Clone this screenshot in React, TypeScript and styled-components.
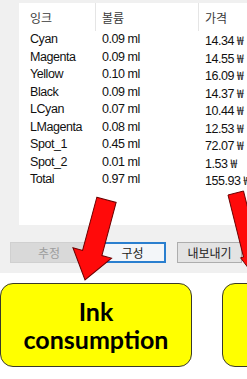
import React from 'react';
import styled, {createGlobalStyle} from 'styled-components';

const GlobalStyle = createGlobalStyle`
  html, body {
    margin: 0;
    padding: 0;
    background: #ffffff;
  }
`;

const Page = styled.div`
  position: relative;
  width: 247px;
  height: 379px;
  overflow: hidden;
  background: #ffffff;
`;

const Dialog = styled.div`
  display: flex;
  flex-direction: column;
  height: 273px;
  padding-top: 3px;
  box-sizing: border-box;
  background: #f0f0f0;
`;

const ListPanel = styled.div`
  margin-left: 19px;
  width: 260px;
  height: 222px;
  background: #ffffff;
  font-family: "Liberation Sans", Arial, sans-serif;
  font-size: 12.5px;
  letter-spacing: -0.45px;
  color: #111;
`;

const Grid = styled.div`
  display: grid;
  grid-template-columns: 76px 103px 1fr;
`;

const HeadCell = styled.div<{$divider?: boolean}>`
  height: 28px;
  display: flex;
  align-items: center;
  padding-left: ${p => (p.$divider ? '6px' : '11px')};
  border-left: ${p => (p.$divider ? '1px solid #e5e5e5' : 'none')};
  font-family: "Noto Sans CJK KR", sans-serif;
  font-size: 12px;
  letter-spacing: 0;
  color: #3a3a3a;
`;

const Cell = styled.div<{$first?: boolean}>`
  height: 17.5px;
  line-height: 17.5px;
  padding-left: ${p => (p.$first ? '11px' : '7px')};
  white-space: nowrap;
`;

const Won = styled.span`
  font-family: "Noto Sans CJK KR", sans-serif;
  font-size: 12px;
  margin-left: 3px;
`;

const ButtonRow = styled.div`
  display: flex;
  gap: 11px;
  margin-top: 17px;
  padding-left: 10px;
`;

const Button = styled.div<{$width: number; $variant?: 'disabled' | 'default'}>`
  width: ${p => p.$width}px;
  height: 21px;
  box-sizing: border-box;
  display: flex;
  align-items: center;
  justify-content: center;
  font-family: "Noto Sans CJK KR", sans-serif;
  font-size: 12px;
  background: ${p => (p.$variant === 'disabled' ? '#d9d9d9' : p.$variant === 'default' ? '#f3f6f9' : '#e3e3e3')};
  color: ${p => (p.$variant === 'disabled' ? '#9d9d9d' : '#222')};
  border: ${p => (p.$variant === 'default' ? '2px solid #2a7fcf' : p.$variant === 'disabled' ? '1px solid #d0d0d0' : '1px solid #adadad')};
`;

const Notes = styled.div`
  display: flex;
  gap: 30px;
  padding-top: 10px;
`;

const Note = styled.div`
  flex: 0 0 auto;
  width: 192px;
  height: 84px;
  box-sizing: border-box;
  display: flex;
  align-items: center;
  justify-content: center;
  text-align: center;
  background: #ffff00;
  border: 1.5px solid #3a3a2a;
  border-radius: 13px;
  font-family: Lato, "Open Sans", sans-serif;
  font-weight: 700;
  font-size: 25px;
  line-height: 28px;
  color: #000;
`;

const Overlay = styled.svg`
  position: absolute;
  left: 0;
  top: 0;
  pointer-events: none;
`;

const inks = [
  ['Cyan', '0.09 ml', '14.34'],
  ['Magenta', '0.09 ml', '14.55'],
  ['Yellow', '0.10 ml', '16.09'],
  ['Black', '0.09 ml', '14.37'],
  ['LCyan', '0.07 ml', '10.44'],
  ['LMagenta', '0.08 ml', '12.53'],
  ['Spot_1', '0.45 ml', '72.07'],
  ['Spot_2', '0.01 ml', '1.53'],
  ['Total', '0.97 ml', '155.93'],
];

export default function App() {
  return (
    <Page>
      <GlobalStyle />
      <Dialog>
        <ListPanel>
          <Grid>
            <HeadCell>잉크</HeadCell>
            <HeadCell $divider>볼륨</HeadCell>
            <HeadCell $divider>가격</HeadCell>
            {inks.map(([name, vol, price]) => (
              <React.Fragment key={name}>
                <Cell $first>{name}</Cell>
                <Cell>{vol}</Cell>
                <Cell>
                  {price}
                  <Won>₩</Won>
                </Cell>
              </React.Fragment>
            ))}
          </Grid>
        </ListPanel>
        <ButtonRow>
          <Button $width={78} $variant="disabled">추정</Button>
          <Button $width={67} $variant="default">구성</Button>
          <Button $width={65}>내보내기</Button>
        </ButtonRow>
      </Dialog>
      <Notes>
        <Note>Ink<br />consumption</Note>
        <Note />
      </Notes>
      <Overlay width="247" height="379" viewBox="0 0 247 379">
        <polygon
          points="75,197 95,197 95,252 105,252 85,280 65,252 75,252"
          transform="rotate(15 85 280)"
          fill="#ff0a0a"
          stroke="#6b0000"
          strokeWidth="1"
          strokeLinejoin="miter"
        />
        <polygon
          points="228,195 243.5,191 259,253 268.7,251 257.5,280.4 240.6,257.8 243.5,257"
          fill="#ff0a0a"
          stroke="#6b0000"
          strokeWidth="1"
        />
      </Overlay>
    </Page>
  );
}
